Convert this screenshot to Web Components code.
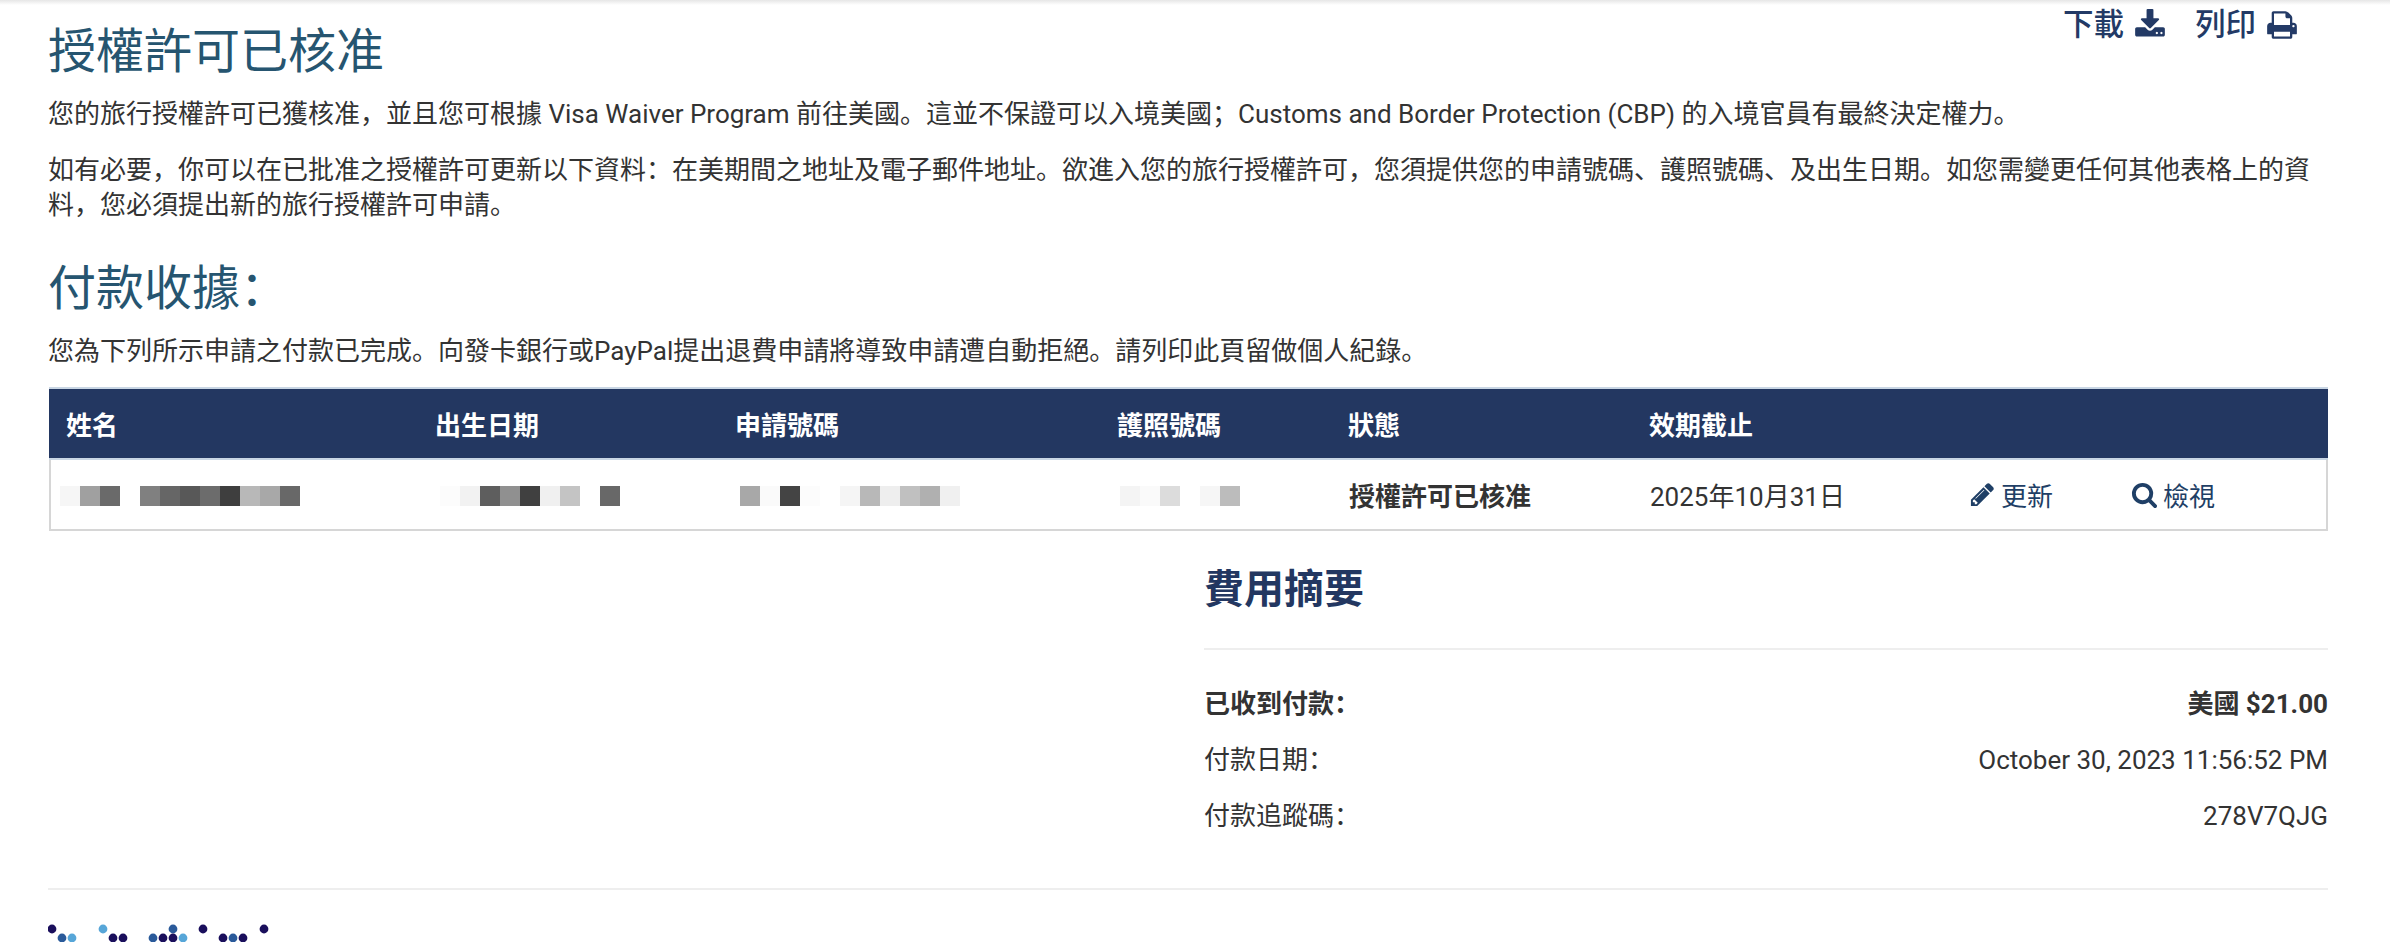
<!DOCTYPE html>
<html lang="zh-CN">
<head>
<meta charset="utf-8">
<title>授權許可已核准</title>
<style>
  html, body { margin: 0; padding: 0; background: #fff; }
  body {
    font-family: Roboto, "Noto Sans CJK SC", sans-serif;
    font-size: 26px;
    color: #333;
    height: 942px;
    overflow: hidden;
  }
</style>
</head>
<body>
<esta-page>
  <esta-actions slot="actions"></esta-actions>
  <esta-heading>授權許可已核准</esta-heading>
  <esta-text style="margin-top:16px">您的旅行授權許可已獲核准，並且您可根據 Visa Waiver Program 前往美國。這並不保證可以入境美國；Customs and Border Protection (CBP) 的入境官員有最終決定權力。</esta-text>
  <esta-text style="margin-top:21px">如有必要，你可以在已批准之授權許可更新以下資料：在美期間之地址及電子郵件地址。欲進入您的旅行授權許可，您須提供您的申請號碼、護照號碼、及出生日期。如您需變更任何其他表格上的資料，您必須提出新的旅行授權許可申請。</esta-text>
  <esta-heading style="margin-top:37px">付款收據：</esta-heading>
  <esta-text style="margin-top:16px">您為下列所示申請之付款已完成。向發卡銀行或PayPal提出退費申請將導致申請遭自動拒絕。請列印此頁留做個人紀錄。</esta-text>
  <esta-table></esta-table>
  <fee-summary>
    <fee-row strong label="已收到付款：">美國 $21.00</fee-row>
    <fee-row label="付款日期：">October 30, 2023 11:56:52 PM</fee-row>
    <fee-row label="付款追蹤碼：">278V7QJG</fee-row>
  </fee-summary>
  <esta-footer></esta-footer>
</esta-page>

<script>
// iconos dibujados en una cuadricula de 1792
const ICONOS = {
  descarga: "M1344 1344q0-26-19-45t-45-19-45 19-19 45 19 45 45 19 45-19 19-45zm256 0q0-26-19-45t-45-19-45 19-19 45 19 45 45 19 45-19 19-45zm128-224v320q0 40-28 68t-68 28h-1472q-40 0-68-28t-28-68v-320q0-40 28-68t68-28h465l135 136q58 56 136 56t136-56l136-136h464q40 0 68 28t28 68zm-325-569q17 41-14 70l-448 448q-18 19-45 19t-45-19l-448-448q-31-29-14-70 17-39 59-39h256v-448q0-26 19-45t45-19h256q26 0 45 19t19 45v448h256q42 0 59 39z",
  impresora: "M448 1536h896v-256h-896v256zm0-640h896v-384h-160q-40 0-68-28t-28-68v-160h-640v640zm1152 64q0-26-19-45t-45-19-45 19-19 45 19 45 45 19 45-19 19-45zm128 0v416q0 13-9.5 22.5t-22.5 9.5h-224v160q0 40-28 68t-68 28h-960q-40 0-68-28t-28-68v-160h-224q-13 0-22.5-9.5t-9.5-22.5v-416q0-79 56.5-135.5t135.5-56.5h64v-544q0-40 28-68t68-28h672q40 0 88 20t76 48l152 152q28 28 48 76t20 88v256h64q79 0 135.5 56.5t56.5 135.5z",
  lapiz: "M491 1536l91-91-235-235-91 91v107h128v128h107zm523-928q0-22-22-22-10 0-17 7l-542 542q-7 7-7 17 0 22 22 22 10 0 17-7l542-542q7-7 7-17zm-54-192l416 416-832 832h-416v-416zm683 96q0 53-37 90l-166 166-416-416 166-165q36-38 90-38 53 0 91 38l235 234q37 39 37 91z",
  lupa: "M1216 832q0-185-131.5-316.5t-316.5-131.5-316.5 131.5-131.5 316.5 131.5 316.5 316.5 131.5 316.5-131.5 131.5-316.5zm512 832q0 52-38 90t-90 38q-54 0-90-38l-343-342q-179 124-399 124-143 0-273.5-55.5t-225-150-150-225-55.5-273.5 55.5-273.5 150-225 225-150 273.5-55.5 273.5 55.5 225 150 150 225 55.5 273.5q0 220-124 399l343 343q37 37 37 90z"
};

function icono(nombre, size) {
  return `<svg width="${size}" height="${size}" viewBox="0 0 1792 1792" fill="currentColor" aria-hidden="true"><path d="${ICONOS[nombre]}"/></svg>`;
}

class EstaPage extends HTMLElement {
  constructor() {
    super();
    this.attachShadow({ mode: "open" });
    this.shadowRoot.innerHTML = `
      <style>
        :host { display: block; position: relative; height: 942px; overflow: hidden; }
        .sombra { height: 5px; background: linear-gradient(#e6e6e6, #fff); }
        .top { display: flex; justify-content: flex-end; height: 0; padding-right: 92px; }
        main { padding: 18px 62px 0 48px; }
      </style>
      <div class="sombra"></div>
      <div class="top"><slot name="actions"></slot></div>
      <main><slot></slot></main>`;
  }
}

class EstaActions extends HTMLElement {
  constructor() {
    super();
    this.attachShadow({ mode: "open" });
    this.shadowRoot.innerHTML = `
      <style>
        :host { display: flex; gap: 29px; color: #233a66; font-size: 30.5px; font-weight: 500; line-height: 38px; height: 38px; margin-top: 1px; }
        a { display: flex; align-items: center; gap: 10px; }
      </style>
      <a>下載 ${icono("descarga", 32)}</a>
      <a>列印 ${icono("impresora", 32)}</a>`;
  }
}

class EstaHeading extends HTMLElement {
  constructor() {
    super();
    this.attachShadow({ mode: "open" });
    this.shadowRoot.innerHTML = `
      <style>
        :host { display: block; font-size: 48px; font-weight: 400; line-height: 58px; color: #265570; }
      </style>
      <slot></slot>`;
  }
}

class EstaText extends HTMLElement {
  constructor() {
    super();
    this.attachShadow({ mode: "open" });
    this.shadowRoot.innerHTML = `
      <style>
        :host { display: block; font-size: 26px; line-height: 35px; color: #333; margin-top: 4px; }
      </style>
      <slot></slot>`;
  }
}

// Celdas pixeladas de los datos personales, cada una de 20px
class BlurCells extends HTMLElement {
  connectedCallback() {
    if (this.shadowRoot) return;
    this.attachShadow({ mode: "open" });
    const celdas = this.getAttribute("tones").split(" ")
      .map((t) => `<i style="background:#${t}"></i>`).join("");
    this.shadowRoot.innerHTML = `
      <style>
        :host { display: flex; }
        i { display: block; width: 20px; height: 20px; }
      </style>${celdas}`;
  }
}

class EstaTable extends HTMLElement {
  constructor() {
    super();
    this.attachShadow({ mode: "open" });
    this.shadowRoot.innerHTML = `
      <style>
        :host { display: block; margin: 18px 0 0 1px; width: 2279px; box-sizing: border-box; }
        .fila {
          display: grid;
          grid-template-columns: 368px 300px 382px 231px 301px 320px 162px 1fr;
          align-items: center;
        }
        .cab {
          height: 69px;
          background: #233761;
          color: #fff;
          font-weight: 700;
          font-size: 26px;
          border-top: 2px solid #c9d6e4;
          border-bottom: 2px solid #c9d6e4;
        }
        .cuerpo {
          height: 69px;
          border: 2px solid #d6d6d6;
          border-top: 0;
          margin: 0;
          color: #333;
          font-size: 26px;
        }
        .fila > * { padding-left: 17px; }
        .cab > * { padding-left: 18px; }
        .cab > :first-child { padding-left: 17px; }
        blur-cells { margin-top: 2px; }
        b { font-weight: 700; }
        a { color: #1f3f66; display: flex; align-items: center; gap: 5px; }
        a svg { margin-left: -1px; }
      </style>
      <div class="fila cab">
        <span>姓名</span><span>出生日期</span><span>申請號碼</span><span>護照號碼</span><span>狀態</span><span>效期截止</span><span></span><span></span>
      </div>
      <div class="fila cuerpo">
        <div style="padding-left:9px"><blur-cells tones="f6f6f6 a0a0a0 6a6a6a ffffff 808080 666666 585858 6c6c6c 3e3e3e b8b8b8 a8a8a8 686868"></blur-cells></div>
        <div style="padding-left:21px"><blur-cells tones="fcfcfc f2f2f2 5e5e5e 909090 404040 f0f0f0 c4c4c4 ffffff 686868"></blur-cells></div>
        <div style="padding-left:21px"><blur-cells tones="a8a8a8 fafafa 444444 fcfcfc ffffff f5f5f5 b8b8b8 eeeeee c0c0c0 b0b0b0 f0f0f0"></blur-cells></div>
        <div style="padding-left:19px"><blur-cells tones="f4f4f4 fafafa dcdcdc ffffff f6f6f6 bcbcbc"></blur-cells></div>
        <b>授權許可已核准</b>
        <span>2025年10月31日</span>
        <a>${icono("lapiz", 27)}更新</a>
        <a>${icono("lupa", 27)}檢視</a>
      </div>`;
  }
}

class FeeSummary extends HTMLElement {
  constructor() {
    super();
    this.attachShadow({ mode: "open" });
    this.shadowRoot.innerHTML = `
      <style>
        :host { display: block; margin: 32px 0 0 1156px; width: 1124px; }
        h2 { margin: 0; font-size: 40px; line-height: 54px; font-weight: 700; color: #233761; }
        hr { border: 0; height: 2px; background: #eee; margin: 31px 0 26px; }
      </style>
      <h2>費用摘要</h2>
      <hr>
      <slot></slot>`;
  }
}

class FeeRow extends HTMLElement {
  connectedCallback() {
    if (this.shadowRoot) return;
    this.attachShadow({ mode: "open" });
    const peso = this.hasAttribute("strong") ? 700 : 400;
    this.shadowRoot.innerHTML = `
      <style>
        :host { display: flex; justify-content: space-between; height: 56px; line-height: 56px; font-size: 26px; color: #333; font-weight: ${peso}; }
      </style>
      <span>${this.getAttribute("label")}</span>
      <span><slot></slot></span>`;
  }
}

// Pie: regla y la parte visible del logotipo de puntos
class EstaFooter extends HTMLElement {
  constructor() {
    super();
    this.attachShadow({ mode: "open" });
    const O = "#1a0f5c", M = "#2a5a9a", C = "#57a6d8";
    const puntos = [
      [4, 0, O], [55, 0, C], [125, 0, M], [155, 0, O], [216, 0, O],
      [14, 9, M], [24, 9, C], [65, 9, O], [75, 9, O], [105, 9, M], [115, 9, O],
      [125, 9, O], [135, 9, C], [175, 9, O], [185, 9, M], [195, 9, O]
    ].map(([x, y, c]) => `<circle cx="${x}" cy="${y + 5}" r="4.4" fill="${c}"/>`).join("");
    this.shadowRoot.innerHTML = `
      <style>
        :host { display: block; width: 2280px; margin-top: 44px; }
        hr { border: 0; height: 2px; background: #eee; margin: 0 0 34px; }
        svg { display: block; }
      </style>
      <hr>
      <svg width="230" height="20" viewBox="0 0 230 20">${puntos}</svg>`;
  }
}

customElements.define("esta-page", EstaPage);
customElements.define("esta-actions", EstaActions);
customElements.define("esta-heading", EstaHeading);
customElements.define("esta-text", EstaText);
customElements.define("blur-cells", BlurCells);
customElements.define("esta-table", EstaTable);
customElements.define("fee-summary", FeeSummary);
customElements.define("fee-row", FeeRow);
customElements.define("esta-footer", EstaFooter);
</script>
</body>
</html>
